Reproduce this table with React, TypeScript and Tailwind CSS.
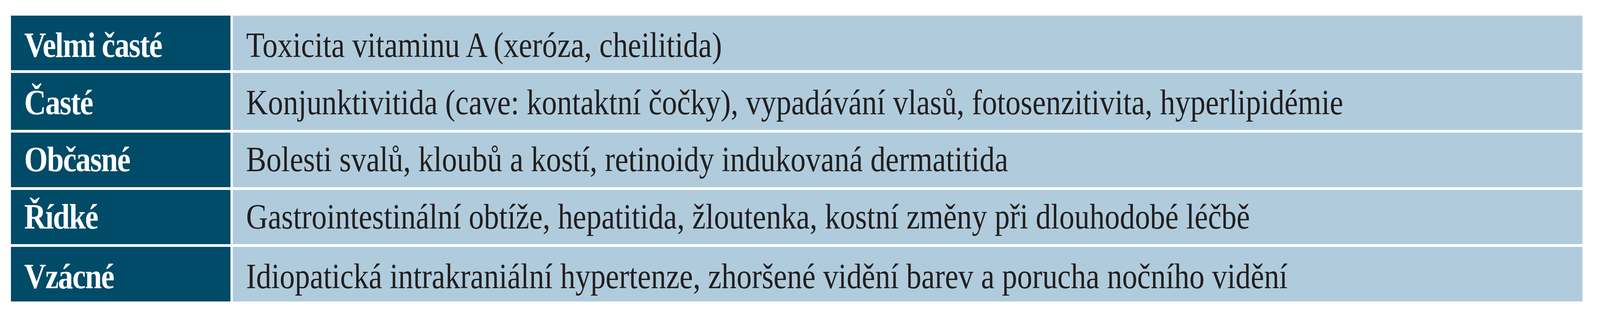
// The browser window is 4096px wide; the table is laid out at 4096/4813 of the
// reference widths, and the text is narrowed by the same factor.
const rows = [
  { label: "Velmi časté", text: "Toxicita vitaminu A (xeróza, cheilitida)", h: "h-[140px]", pt: "pt-[30px]" },
  {
    label: "Časté",
    text: "Konjunktivitida (cave: kontaktní čočky), vypadávání vlasů, fotosenzitivita, hyperlipidémie",
    h: "h-[146px]",
    pt: "pt-[30px]",
  },
  { label: "Občasné", text: "Bolesti svalů, kloubů a kostí, retinoidy indukovaná dermatitida", h: "h-[140px]", pt: "pt-[23px]" },
  {
    label: "Řídké",
    text: "Gastrointestinální obtíže, hepatitida, žloutenka, kostní změny při dlouhodobé léčbě",
    h: "h-[139px]",
    pt: "pt-[23px]",
  },
  {
    label: "Vzácné",
    text: "Idiopatická intrakraniální hypertenze, zhoršené vidění barev a porucha nočního vidění",
    h: "h-[140px]",
    pt: "pt-[30px]",
  },
];

export default function App() {
  return (
    <div className="bg-white pb-[27px] pl-[28px] pt-[40px] font-['Liberation_Serif',serif]">
      <div className="grid w-[4023px] grid-cols-[562px_3455px] gap-x-[6px] gap-y-[7px]">
        {rows.map((row) => (
          <div key={row.label} className="contents">
            <div className={`${row.h} ${row.pt} overflow-hidden whitespace-nowrap bg-[#004b68] pl-[34px]`}>
              <span className="inline-block origin-left scale-x-[0.851] text-[91px] font-bold leading-none tracking-[-0.025em] text-white">
                {row.label}
              </span>
            </div>
            <div className={`${row.h} ${row.pt} overflow-hidden whitespace-nowrap bg-[#b0ccdc] pl-[34px]`}>
              <span className="inline-block origin-left scale-x-[0.851] text-[91px] leading-none text-[#221e1f]">
                {row.text}
              </span>
            </div>
          </div>
        ))}
      </div>
    </div>
  );
}
